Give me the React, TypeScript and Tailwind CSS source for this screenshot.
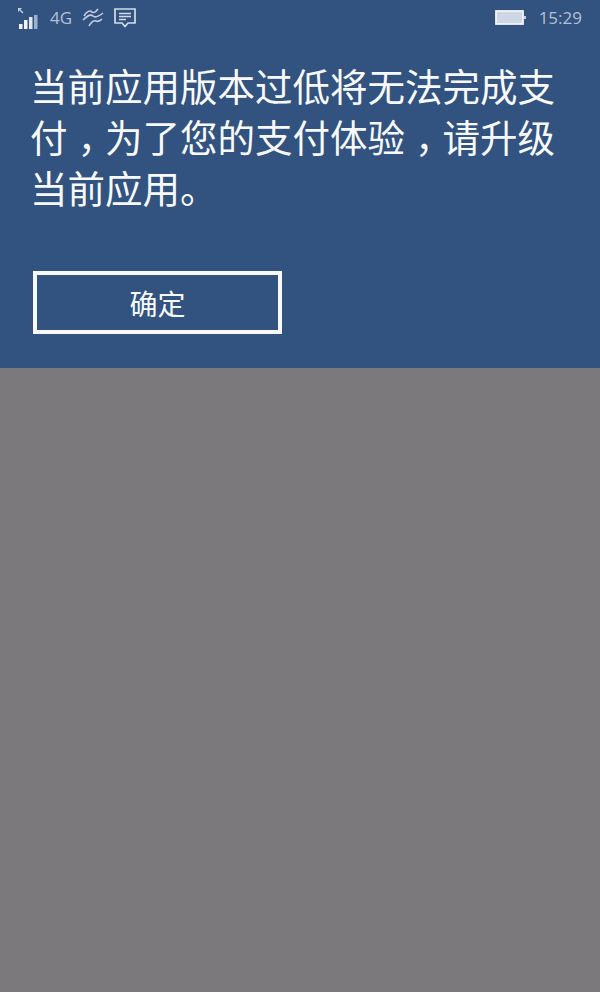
import React from 'react';

const cjk = { fontFamily: '"Noto Sans CJK SC", "Liberation Sans", sans-serif' };

function SignalIcon() {
  return (
    <svg width="24" height="24" viewBox="0 0 24 24">
      <path d="M1 2 L5 2 L1 6 Z" fill="#c4cfe0" />
      <path d="M3 4 L6 7" stroke="#c4cfe0" strokeWidth="1.4" />
      <rect x="2" y="18" width="3.5" height="5" fill="#eef2f8" />
      <rect x="7" y="14" width="3.5" height="9" fill="#eef2f8" />
      <rect x="12" y="11" width="3.5" height="12" fill="#dfe5ef" />
      <rect x="17" y="9" width="3.5" height="14" fill="#9fb0c9" />
    </svg>
  );
}

function WavesIcon() {
  return (
    <svg width="22" height="20" viewBox="0 0 22 20" fill="none" stroke="#c4cfe0" strokeWidth="1.6">
      <path d="M2 8 C5 3 8 2 10 4 C11 5 13 5 16 1" />
      <path d="M1 12 C5 8 9 6 11 8 C13 10 16 9 21 5" />
      <path d="M7 18 C9 14 12 12 14 13 C16 14 18 13 20 11" />
    </svg>
  );
}

function MessageIcon() {
  return (
    <svg width="22" height="20" viewBox="0 0 22 20" fill="none" stroke="#d4dce9" strokeWidth="1.7">
      <path d="M1 1 H21 V15 H14 L11 18.5 L8 15 H1 Z" />
      <path d="M5 5.5 H17 M5 8.5 H17 M5 11.5 H12" strokeWidth="1.3" />
    </svg>
  );
}

function BatteryIcon() {
  return (
    <svg width="32" height="16" viewBox="0 0 32 16">
      <rect x="1" y="1" width="27" height="13" fill="#cfd6e6" stroke="#f2f4f9" strokeWidth="1.8" />
      <rect x="29" y="6" width="2" height="3" fill="#c4cfe0" />
    </svg>
  );
}

// the comma sits in the middle of its cell on this phone, not at the left
function Comma() {
  return <span className="ml-[10px] tracking-[-10px]">，</span>;
}

export default function App() {
  return (
    <div className="w-[600px] h-[992px] flex flex-col bg-[#7b797c]" style={cjk}>
      <div className="h-[368px] bg-[#32527f] flex flex-col">
        <div className="h-[36px] flex items-center justify-between pl-[17px] pr-[18px]">
          <div className="flex items-center">
            <SignalIcon />
            <span className="ml-[9px] text-[17px] text-[#b4c1d6]" style={{ fontFamily: '"Open Sans", sans-serif' }}>4G</span>
            <span className="ml-[10px]"><WavesIcon /></span>
            <span className="ml-[10px]"><MessageIcon /></span>
          </div>
          <div className="flex items-center">
            <BatteryIcon />
            <span className="ml-[12px] text-[17px] text-[#b4c1d6]" style={{ fontFamily: '"Open Sans", sans-serif' }}>15:29</span>
          </div>
        </div>
        <div className="mt-[23px] ml-[30px] w-[530px] text-[37.5px] leading-[51px] text-[#f7f9fb]">
          <div className="h-[51px]">当前应用版本过低将无法完成支</div>
          <div className="h-[51px]">付<Comma />为了您的支付体验<Comma />请升级</div>
          <div className="h-[51px]">当前应用。</div>
        </div>
        <button className="mt-[59px] ml-[33px] w-[249px] h-[63px] border-[4px] border-[#f7f9fb] text-[28px] text-[#f7f9fb] flex items-center justify-center">
          确定
        </button>
      </div>
      <div className="flex-1" />
    </div>
  );
}
